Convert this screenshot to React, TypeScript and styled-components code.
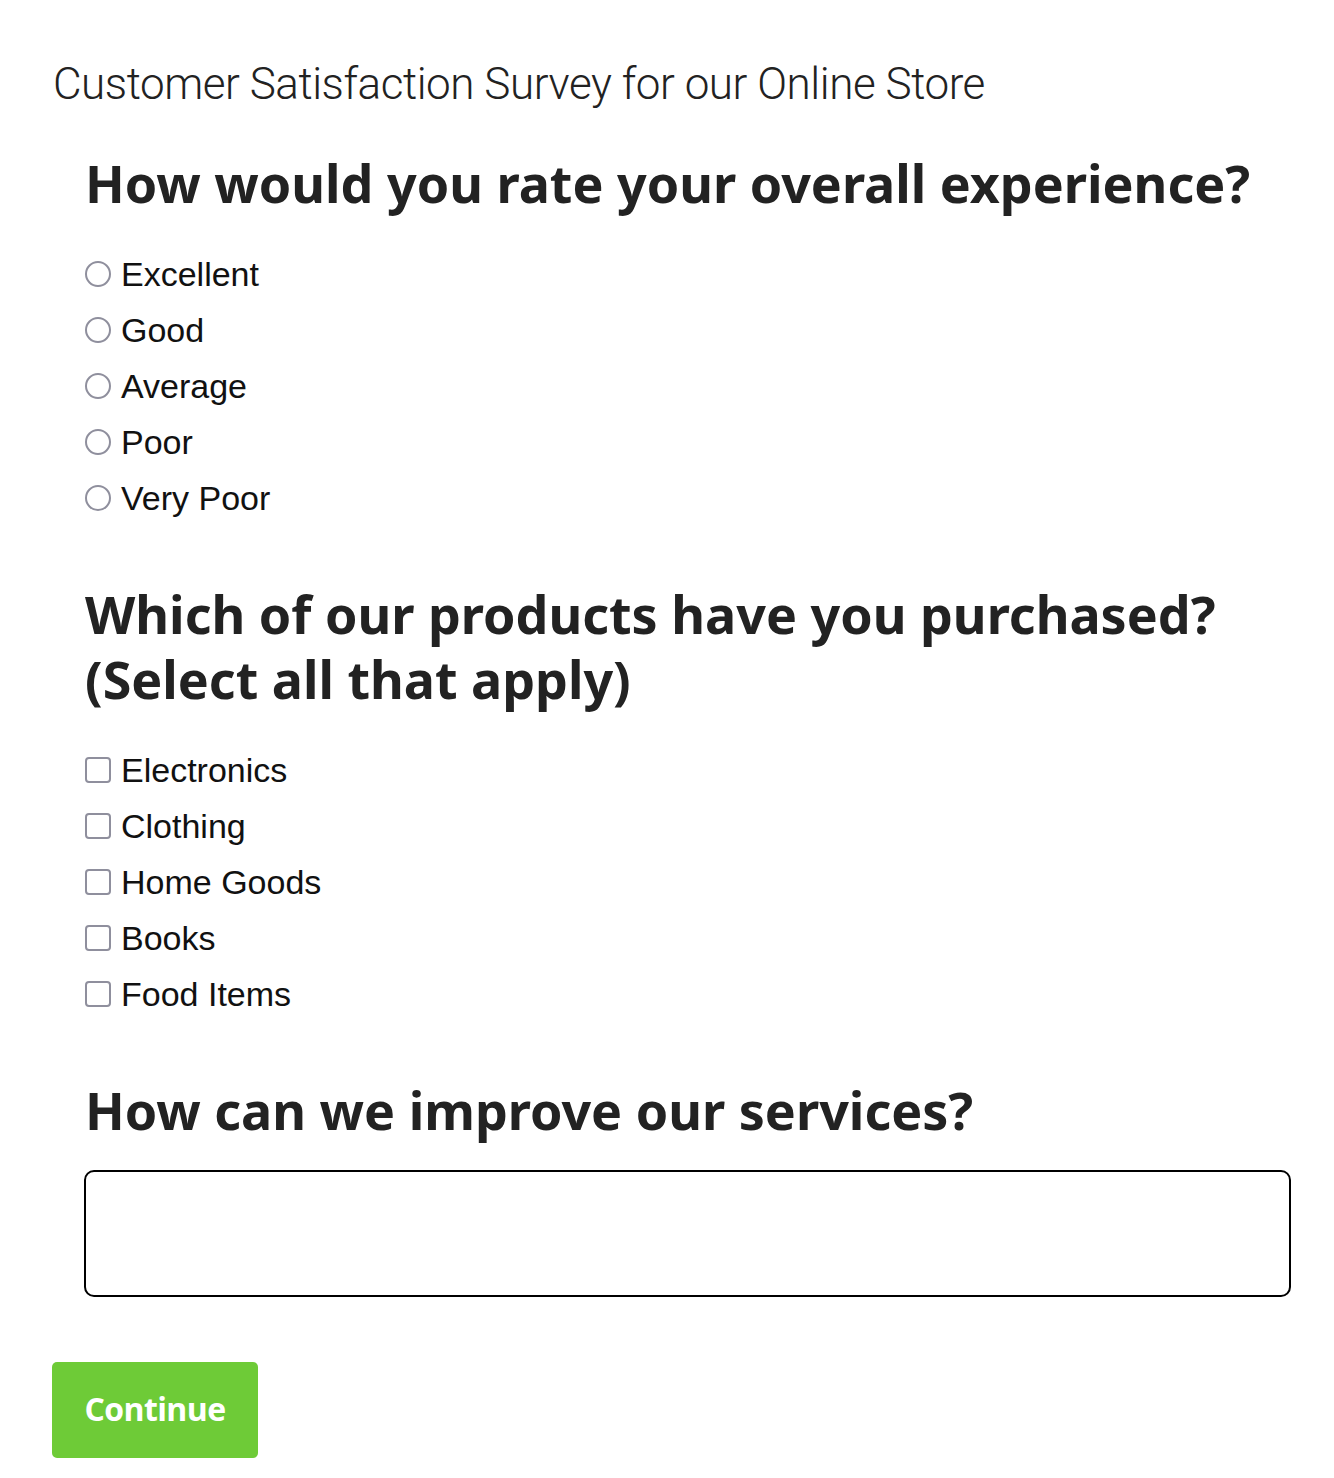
import React from "react";
import styled, { createGlobalStyle } from "styled-components";

const Global = createGlobalStyle`
  html, body { margin: 0; padding: 0; background: #fff; }
  body { font-family: "Liberation Sans", Arial, sans-serif; color: #111; }
`;

const Page = styled.main`
  padding: 52px 0 20px 52px;
  width: 1240px;
`;

const Title = styled.h1`
  margin: 0 0 0 1px;
  font-family: Roboto, "Noto Sans", sans-serif;
  font-weight: 300;
  font-size: 44px;
  line-height: 64px;
  color: #222;
  letter-spacing: -0.45px;
`;

const Section = styled.section<{ $top: number }>`
  padding-left: 33px;
  margin-top: ${(p) => p.$top}px;
`;

const Question = styled.h2`
  margin: 0;
  font-family: "Noto Sans", sans-serif;
  font-weight: 700;
  font-size: 52px;
  line-height: 65px;
  letter-spacing: 0;
  color: #222;
`;

const Options = styled.div<{ $top: number }>`
  display: flex;
  flex-direction: column;
  gap: 12px;
  margin-top: ${(p) => p.$top}px;
`;

const Option = styled.label`
  display: flex;
  align-items: center;
  gap: 10px;
  height: 44px;
  font-family: "Liberation Sans", Arial, sans-serif;
  font-size: 34px;
  color: #111;
`;

const Radio = styled.span`
  width: 26px;
  height: 26px;
  box-sizing: border-box;
  border: 2px solid #8f8f9d;
  border-radius: 50%;
  background: #fff;
  flex: none;
`;

const Check = styled.span`
  width: 26px;
  height: 26px;
  box-sizing: border-box;
  border: 2px solid #8f8f9d;
  border-radius: 4px;
  background: #fff;
  flex: none;
`;

const TextArea = styled.textarea`
  display: block;
  box-sizing: border-box;
  width: 1207px;
  height: 127px;
  margin-top: 28px;
  margin-left: -1px;
  border: 2px solid #000;
  border-radius: 10px;
  resize: none;
  outline: none;
  font-family: "Liberation Sans", sans-serif;
  font-size: 20px;
`;

const Button = styled.button`
  margin-top: 65px;
  width: 206px;
  height: 96px;
  padding: 0 0 4px;
  border: none;
  border-radius: 5px;
  background: #6ecb37;
  color: #fff;
  font-family: "Open Sans", sans-serif;
  font-weight: 700;
  font-size: 32px;
  letter-spacing: -0.6px;
`;

const ratings = ["Excellent", "Good", "Average", "Poor", "Very Poor"];
const products = ["Electronics", "Clothing", "Home Goods", "Books", "Food Items"];

export default function App() {
  return (
    <>
      <Global />
      <Page>
        <Title>Customer Satisfaction Survey for our Online Store</Title>
        <Section $top={34}>
          <Question>How would you rate your overall experience?</Question>
          <Options $top={37}>
            {ratings.map((r) => (
              <Option key={r}>
                <Radio />
                {r}
              </Option>
            ))}
          </Options>
        </Section>
        <Section $top={61}>
          <Question>
            Which of our products have you purchased?
            <br />
            (Select all that apply)
          </Question>
          <Options $top={37}>
            {products.map((p) => (
              <Option key={p}>
                <Check />
                {p}
              </Option>
            ))}
          </Options>
        </Section>
        <Section $top={61}>
          <Question>How can we improve our services?</Question>
          <TextArea />
        </Section>
        <Button>Continue</Button>
      </Page>
    </>
  );
}
